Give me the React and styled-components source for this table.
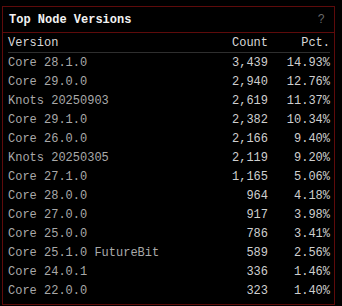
import React from "react";
import styled, { createGlobalStyle } from "styled-components";

const Global = createGlobalStyle`
  html, body { margin: 0; padding: 0; background: #000; }
  body { font-family: "Liberation Mono", "DejaVu Sans Mono", monospace; }
`;

const Page = styled.div`
  padding: 6px 7px 0 2px;
`;

const Panel = styled.section`
  width: 333px;
  box-sizing: border-box;
  border: 1px solid #5e0b0b;
  background: #000;
`;

const TitleBar = styled.header`
  display: flex;
  align-items: center;
  justify-content: space-between;
  height: 25px;
  padding: 0 9px 0 6px;
  border-bottom: 1px solid #5e0b0b;
`;

const Title = styled.h2`
  margin: 0;
  font-size: 12px;
  font-weight: bold;
  color: #f2f2f2;
`;

const Help = styled.span`
  font-size: 12px;
  color: #6a6a6a;
`;

const Body = styled.div`
  padding: 0 4px 4px 5px;
`;

const Table = styled.table`
  width: 100%;
  border-collapse: collapse;
  font-size: 12px;
`;

const Th = styled.th`
  font-weight: normal;
  color: #d8d8d8;
  text-align: ${(p) => (p.$right ? "right" : "left")};
  height: 19px;
  padding: 0 ${(p) => (p.$right ? "0" : "0")} 0 ${(p) => (p.$right ? "0" : "0")};
  border-bottom: 1px solid #2e2e2e;
  white-space: nowrap;
`;

const Td = styled.td`
  height: 19px;
  padding: 0;
  color: ${(p) => (p.$num ? "#cfcfcf" : "#a9a9a9")};
  text-align: ${(p) => (p.$num ? "right" : "left")};
  white-space: nowrap;
  width: ${(p) => p.$w || "auto"};
`;

const rows = [
  ["Core 28.1.0", "3,439", "14.93%"],
  ["Core 29.0.0", "2,940", "12.76%"],
  ["Knots 20250903", "2,619", "11.37%"],
  ["Core 29.1.0", "2,382", "10.34%"],
  ["Core 26.0.0", "2,166", "9.40%"],
  ["Knots 20250305", "2,119", "9.20%"],
  ["Core 27.1.0", "1,165", "5.06%"],
  ["Core 28.0.0", "964", "4.18%"],
  ["Core 27.0.0", "917", "3.98%"],
  ["Core 25.0.0", "786", "3.41%"],
  ["Core 25.1.0 FutureBit", "589", "2.56%"],
  ["Core 24.0.1", "336", "1.46%"],
  ["Core 22.0.0", "323", "1.40%"],
];

export default function App() {
  return (
    <Page>
      <Global />
      <Panel>
        <TitleBar>
          <Title>Top Node Versions</Title>
          <Help>?</Help>
        </TitleBar>
        <Body>
          <Table>
            <thead>
              <tr>
                <Th>Version</Th>
                <Th $right>Count</Th>
                <Th $right>Pct.</Th>
              </tr>
            </thead>
            <tbody>
              {rows.map(([v, c, p]) => (
                <tr key={v}>
                  <Td>{v}</Td>
                  <Td $num $w="60px">{c}</Td>
                  <Td $num $w="62px">{p}</Td>
                </tr>
              ))}
            </tbody>
          </Table>
        </Body>
      </Panel>
    </Page>
  );
}
